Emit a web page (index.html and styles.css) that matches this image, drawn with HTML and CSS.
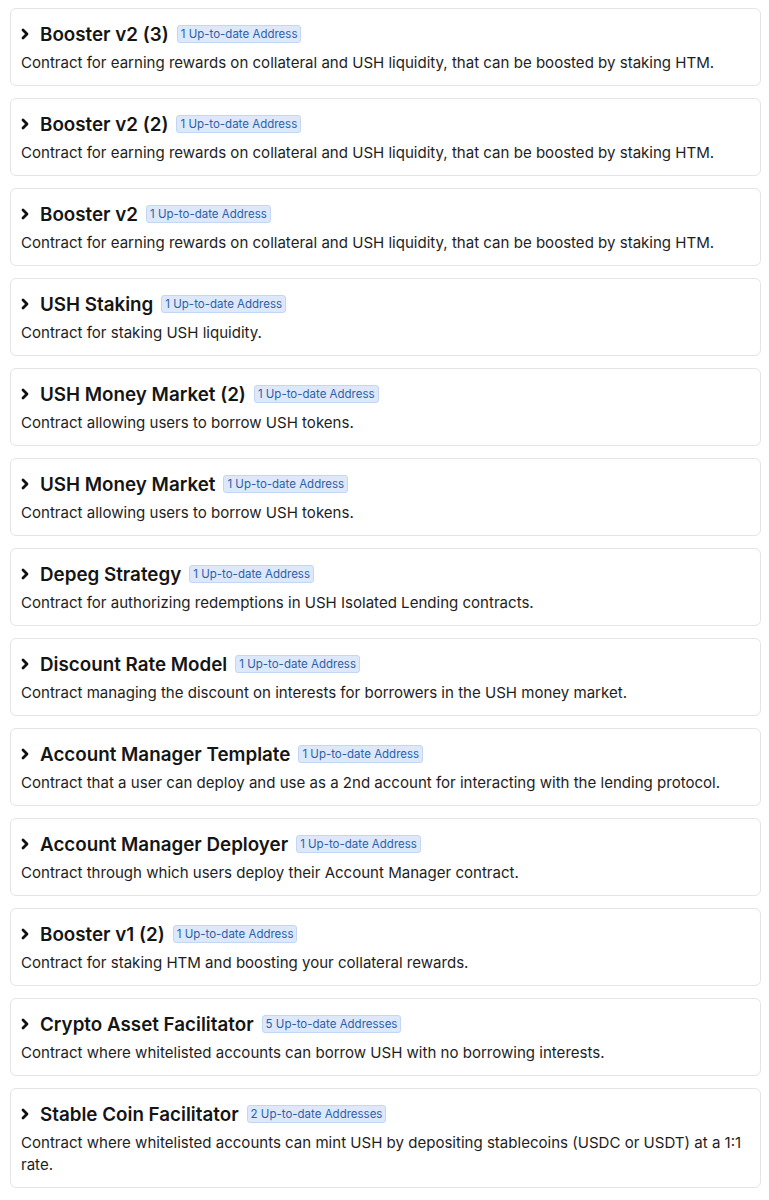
FILE: index.html
```html
<!DOCTYPE html>
<html>

<head>
    <meta charset="utf-8">
    <meta name="viewport" content="width=device-width, initial-scale=1.0">
    <title>Contracts</title>
    <link rel="stylesheet" href="styles.css">
</head>

<body>
    <div id="list">
        <div class="item">
            <div class="head">
                <svg class="arrow" viewBox="0 0 8 12"><path d="M2 2l4 4-4 4" /></svg>
                <span class="name">Booster v2 (3)</span>
                <span class="tag">1 Up-to-date Address</span>
            </div>
            <p class="desc">Contract for earning rewards on collateral and USH liquidity, that can be boosted by staking HTM.</p>
        </div>
        <div class="item">
            <div class="head">
                <svg class="arrow" viewBox="0 0 8 12"><path d="M2 2l4 4-4 4" /></svg>
                <span class="name">Booster v2 (2)</span>
                <span class="tag">1 Up-to-date Address</span>
            </div>
            <p class="desc">Contract for earning rewards on collateral and USH liquidity, that can be boosted by staking HTM.</p>
        </div>
        <div class="item">
            <div class="head">
                <svg class="arrow" viewBox="0 0 8 12"><path d="M2 2l4 4-4 4" /></svg>
                <span class="name">Booster v2</span>
                <span class="tag">1 Up-to-date Address</span>
            </div>
            <p class="desc">Contract for earning rewards on collateral and USH liquidity, that can be boosted by staking HTM.</p>
        </div>
        <div class="item">
            <div class="head">
                <svg class="arrow" viewBox="0 0 8 12"><path d="M2 2l4 4-4 4" /></svg>
                <span class="name">USH Staking</span>
                <span class="tag">1 Up-to-date Address</span>
            </div>
            <p class="desc">Contract for staking USH liquidity.</p>
        </div>
        <div class="item">
            <div class="head">
                <svg class="arrow" viewBox="0 0 8 12"><path d="M2 2l4 4-4 4" /></svg>
                <span class="name">USH Money Market (2)</span>
                <span class="tag">1 Up-to-date Address</span>
            </div>
            <p class="desc">Contract allowing users to borrow USH tokens.</p>
        </div>
        <div class="item">
            <div class="head">
                <svg class="arrow" viewBox="0 0 8 12"><path d="M2 2l4 4-4 4" /></svg>
                <span class="name">USH Money Market</span>
                <span class="tag">1 Up-to-date Address</span>
            </div>
            <p class="desc">Contract allowing users to borrow USH tokens.</p>
        </div>
        <div class="item">
            <div class="head">
                <svg class="arrow" viewBox="0 0 8 12"><path d="M2 2l4 4-4 4" /></svg>
                <span class="name">Depeg Strategy</span>
                <span class="tag">1 Up-to-date Address</span>
            </div>
            <p class="desc">Contract for authorizing redemptions in USH Isolated Lending contracts.</p>
        </div>
        <div class="item">
            <div class="head">
                <svg class="arrow" viewBox="0 0 8 12"><path d="M2 2l4 4-4 4" /></svg>
                <span class="name">Discount Rate Model</span>
                <span class="tag">1 Up-to-date Address</span>
            </div>
            <p class="desc">Contract managing the discount on interests for borrowers in the USH money market.</p>
        </div>
        <div class="item">
            <div class="head">
                <svg class="arrow" viewBox="0 0 8 12"><path d="M2 2l4 4-4 4" /></svg>
                <span class="name">Account Manager Template</span>
                <span class="tag">1 Up-to-date Address</span>
            </div>
            <p class="desc">Contract that a user can deploy and use as a 2nd account for interacting with the lending protocol.</p>
        </div>
        <div class="item">
            <div class="head">
                <svg class="arrow" viewBox="0 0 8 12"><path d="M2 2l4 4-4 4" /></svg>
                <span class="name">Account Manager Deployer</span>
                <span class="tag">1 Up-to-date Address</span>
            </div>
            <p class="desc">Contract through which users deploy their Account Manager contract.</p>
        </div>
        <div class="item">
            <div class="head">
                <svg class="arrow" viewBox="0 0 8 12"><path d="M2 2l4 4-4 4" /></svg>
                <span class="name">Booster v1 (2)</span>
                <span class="tag">1 Up-to-date Address</span>
            </div>
            <p class="desc">Contract for staking HTM and boosting your collateral rewards.</p>
        </div>
        <div class="item">
            <div class="head">
                <svg class="arrow" viewBox="0 0 8 12"><path d="M2 2l4 4-4 4" /></svg>
                <span class="name">Crypto Asset Facilitator</span>
                <span class="tag">5 Up-to-date Addresses</span>
            </div>
            <p class="desc">Contract where whitelisted accounts can borrow USH with no borrowing interests.</p>
        </div>
        <div class="item">
            <div class="head">
                <svg class="arrow" viewBox="0 0 8 12"><path d="M2 2l4 4-4 4" /></svg>
                <span class="name">Stable Coin Facilitator</span>
                <span class="tag">2 Up-to-date Addresses</span>
            </div>
            <p class="desc">Contract where whitelisted accounts can mint USH by depositing stablecoins (USDC or USDT) at a 1:1 rate.</p>
        </div>
    </div>
</body>

</html>
```

FILE: styles.css
```css
* {
    padding: 0;
    margin: 0;
    box-sizing: border-box;
}

body {
    background: #fff;
    font-family: Inter, "Noto Sans", sans-serif;
    color: #1a1a1a;
}

#list {
    display: flex;
    flex-direction: column;
    gap: 12px;
    padding: 8px 8px 0 10px;
}

.item {
    padding: 11px 12px 11px 10px;
    border: 1px solid #e4e4e4;
    border-radius: 6px;
    background: #fff;
}

.head {
    display: flex;
    align-items: center;
    height: 28px;
}

.arrow {
    width: 8px;
    height: 12px;
    margin-right: 11px;
    fill: none;
    stroke: #111;
    stroke-width: 2.8;
    stroke-linecap: round;
    stroke-linejoin: round;
}

.name {
    font-size: 18.8px;
    font-weight: 600;
    color: #151515;
}

.tag {
    margin-left: 8px;
    padding: 0 3px;
    height: 18px;
    line-height: 16px;
    font-size: 11.5px;
    color: #2d5fa8;
    background: #dde9fb;
    border: 1px solid #c3d6f3;
    border-radius: 3px;
}

.desc {
    margin-top: 4px;
    font-size: 15.05px;
    line-height: 22px;
    color: #1e1e1e;
}
```
